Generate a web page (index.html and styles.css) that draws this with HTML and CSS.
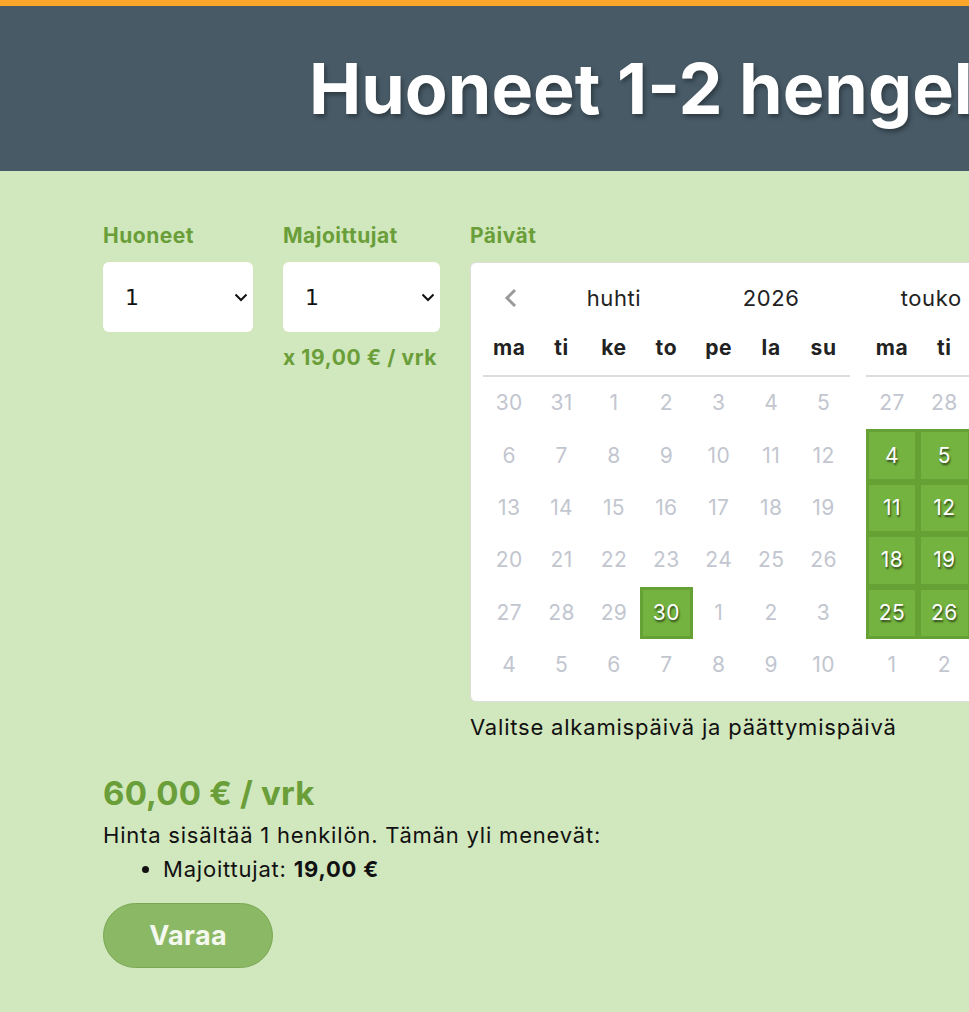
FILE: index.html
```html
<!DOCTYPE html>
<html lang="fi">
<head>
    <meta charset="UTF-8">
    <meta name="viewport" content="width=device-width, initial-scale=1.0">
    <title>Huoneet 1-2 hengelle</title>
    <link rel="stylesheet" href="styles.css">
</head>
<body>

    <header class="hero">
        <h1>Huoneet 1-2 hengelle</h1>
    </header>

    <main class="booking">
        <div class="fields">
            <div class="field">
                <label for="rooms">Huoneet</label>
                <div class="select-wrap">
                    <select id="rooms" class="field-select">
                        <option>1</option>
                        <option>2</option>
                    </select>
                    <svg class="chevron" width="14" height="9" viewBox="0 0 14 9"><path d="M1.5 1.5 L7 7 L12.5 1.5" fill="none" stroke="#111" stroke-width="2"/></svg>
                </div>
            </div>
            <div class="field field-guests">
                <label for="guests">Majoittujat</label>
                <div class="select-wrap">
                    <select id="guests" class="field-select">
                        <option>1</option>
                        <option>2</option>
                    </select>
                    <svg class="chevron" width="14" height="9" viewBox="0 0 14 9"><path d="M1.5 1.5 L7 7 L12.5 1.5" fill="none" stroke="#111" stroke-width="2"/></svg>
                </div>
                <div class="extra-price">x 19,00 € / vrk</div>
            </div>
            <div class="field field-dates">
                <label>Päivät</label>
                <div class="calendar">
                    <div class="month" id="month-april">
                        <div class="month-nav">
                            <span class="nav-prev">
                                <svg width="14" height="20" viewBox="0 0 14 20"><path d="M11 2 L3 10 L11 18" fill="none" stroke="#999" stroke-width="3"/></svg>
                            </span>
                            <span class="nav-month">huhti</span>
                            <span class="nav-year">2026</span>
                        </div>
                    </div>
                    <div class="month" id="month-may">
                        <div class="month-nav month-nav-next">
                            <span class="nav-month">touko</span>
                            <span class="nav-year">2026</span>
                        </div>
                    </div>
                </div>
                <p class="hint">Valitse alkamispäivä ja päättymispäivä</p>
            </div>
        </div>

        <div class="summary">
            <div class="price">60,00 € / vrk</div>
            <p class="price-note">Hinta sisältää 1 henkilön. Tämän yli menevät:</p>
            <ul class="price-extras">
                <li>Majoittujat: <strong>19,00 €</strong></li>
            </ul>
            <button class="book-btn">Varaa</button>
        </div>
    </main>

    <script>
        const weekdays = ['ma', 'ti', 'ke', 'to', 'pe', 'la', 'su'];
        // first bookable day
        const firstFree = new Date(2026, 3, 30);

        function buildMonth(el, year, month) {
            const head = document.createElement('div');
            head.className = 'weekdays';
            weekdays.forEach(w => {
                const d = document.createElement('span');
                d.textContent = w;
                head.appendChild(d);
            });
            el.appendChild(head);

            const grid = document.createElement('div');
            grid.className = 'days';
            const first = new Date(year, month, 1);
            const offset = (first.getDay() + 6) % 7;
            const start = new Date(year, month, 1 - offset);

            for (let i = 0; i < 42; i++) {
                const day = new Date(start.getFullYear(), start.getMonth(), start.getDate() + i);
                const cell = document.createElement('span');
                cell.className = 'day';
                cell.textContent = day.getDate();
                if (day.getMonth() === month && day >= firstFree) {
                    cell.classList.add('free');
                }
                grid.appendChild(cell);
            }
            el.appendChild(grid);
        }

        buildMonth(document.getElementById('month-april'), 2026, 3);
        buildMonth(document.getElementById('month-may'), 2026, 4);
    </script>
</body>
</html>
```

FILE: styles.css
```css
html, body {
    overflow: hidden;
}

body {
    margin: 0;
    font-family: Inter, "Open Sans", sans-serif;
    background-color: #d1e7bd;
    color: #111;
    min-height: 100vh;
    font-size: 22px;
    line-height: 30px;
    letter-spacing: 0.8px;
}

.hero {
    background-color: #475a66;
    border-top: 6px solid #f9a62b;
    height: 165px;
    display: flex;
    align-items: center;
    padding-left: 309px;
}

.hero h1 {
    margin: 0;
    color: #fff;
    font-size: 70px;
    line-height: 80px;
    font-weight: 700;
    white-space: nowrap;
    text-shadow: 2px 3px 4px rgba(0, 0, 0, 0.35);
    letter-spacing: 0;
}

.booking {
    padding: 50px 0 0 103px;
}

.fields {
    display: flex;
    gap: 30px;
    align-items: flex-start;
}

.field {
    display: flex;
    flex-direction: column;
}

.field label {
    color: #6a9e39;
    font-weight: 700;
    font-size: 21px;
    height: 41px;
    line-height: 30px;
    letter-spacing: 0.5px;
}

.select-wrap {
    position: relative;
}

.field-select {
    width: 150px;
    height: 70px;
    border: none;
    border-radius: 6px;
    background-color: #fff;
    font-family: "DejaVu Sans", sans-serif;
    font-size: 22px;
    padding: 0 0 0 22px;
    color: #111;
    appearance: none;
    -webkit-appearance: none;
    display: block;
}

.chevron {
    position: absolute;
    right: 5px;
    top: 31px;
    pointer-events: none;
}

.field-guests .field-select {
    width: 157px;
}

.extra-price {
    color: #6a9e39;
    font-weight: 700;
    font-size: 21px;
    line-height: 26px;
    margin-top: 13px;
    letter-spacing: 0.6px;
}

.calendar {
    display: flex;
    gap: 16px;
    background-color: #fff;
    border: 1px solid #ddd;
    border-radius: 6px;
    padding: 12px 0 10px 12px;
    width: 760px;
    letter-spacing: 0;
}

.month-nav {
    display: grid;
    grid-template-columns: repeat(7, 52.4px);
    height: 46px;
    align-items: center;
    font-size: 22px;
    letter-spacing: 0.6px;
    color: #222;
}

.nav-prev {
    display: flex;
    justify-content: center;
    padding-left: 4px;
}

.nav-month {
    grid-column: 2 / 5;
    text-align: center;
}

.nav-year {
    grid-column: 5 / 8;
    text-align: center;
}

.month-nav-next .nav-month {
    grid-column: 1 / 4;
    padding-left: 35px;
    text-align: left;
}

.month-nav-next .nav-year {
    grid-column: 5 / 8;
}

.weekdays {
    display: grid;
    grid-template-columns: repeat(7, 52.4px);
    height: 56px;
    align-items: center;
    font-weight: 700;
    font-size: 21px;
    letter-spacing: 0.6px;
    text-align: center;
    border-bottom: 2px solid #ddd;
    box-sizing: border-box;
    color: #222;
}

.days {
    display: grid;
    grid-template-columns: repeat(7, 52.4px);
    grid-auto-rows: 52.4px;
}

.day {
    display: flex;
    align-items: center;
    justify-content: center;
    font-size: 21px;
    letter-spacing: 0.4px;
    color: #c2c6cf;
}

.day.free {
    background-color: #74b33f;
    border: 3px solid #66a136;
    color: #fff;
    text-shadow: 1px 2px 2px rgba(0, 0, 0, 0.6);
}

.hint {
    margin: 10px 0 0;
}

.summary {
    margin-top: 31px;
}

.price {
    color: #6a9e39;
    font-weight: 700;
    font-size: 33px;
    line-height: 40px;
    letter-spacing: 0.2px;
}

.price-note {
    margin: 7px 0 0;
}

.price-extras {
    margin: 4px 0 0;
    padding-left: 60px;
}

.book-btn {
    display: block;
    margin-top: 19px;
    width: 170px;
    height: 65px;
    border-radius: 33px;
    border: 1px solid #7ba754;
    background-color: #8bb865;
    color: #f4f8ef;
    font-family: Inter, sans-serif;
    font-weight: 700;
    font-size: 27px;
    letter-spacing: 0.3px;
    cursor: pointer;
}
```
